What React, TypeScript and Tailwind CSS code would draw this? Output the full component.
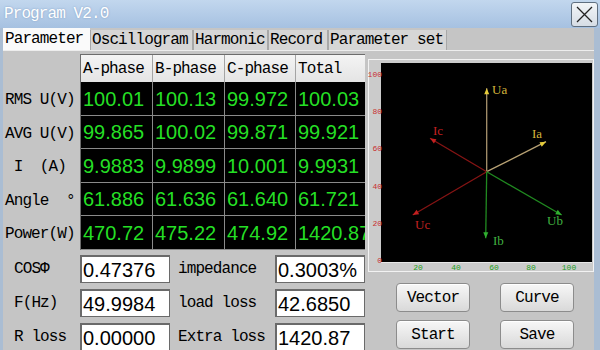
import React from "react";

const mono = "font-['Liberation_Mono',monospace] text-[16px] tracking-[-0.9px]";
const sans = "font-['Liberation_Sans',Arial,sans-serif]";

const tabs = [
  ["Parameter", "w-[87px]"],
  ["Oscillogram", "w-[103px]"],
  ["Harmonic", "w-[75px]"],
  ["Record", "w-[60px]"],
  ["Parameter set", "w-[119px]"],
];
const header = ["A-phase", "B-phase", "C-phase", "Total"];
const colW = ["w-[72px]", "w-[72px]", "w-[71px]", "w-[72px]"];
const rowH = ["h-[34px]", "h-[33px]", "h-[34px]", "h-[33px]", "h-[34px]"];

const rows = [
  { label: "RMS U(V)", values: ["100.01", "100.13", "99.972", "100.03"] },
  { label: "AVG U(V)", values: ["99.865", "100.02", "99.871", "99.921"] },
  { label: " I  (A)", values: ["9.9883", "9.9899", "10.001", "9.9931"] },
  { label: "Angle  °", values: ["61.886", "61.636", "61.640", "61.721"] },
  { label: "Power(W)", values: ["470.72", "475.22", "474.92", "1420.87"] },
];

const fields = [
  ["COSΦ", "0.47376", "impedance", "0.3003%"],
  ["F(Hz)", "49.9984", "load loss", "42.6850"],
  ["R loss", "0.00000", "Extra loss", "1420.87"],
];

// vector lines, relative to the chart panel
const cx = 118.7;
const cy = 112.7;
const vectors = [
  { name: "Ua", x: 118.7, y: 29.3, line: "#a8936e", head: "#e6cc3a", text: "#d4b43c", lx: 124, ly: 35 },
  { name: "Ia", x: 178, y: 82.7, line: "#b8a274", head: "#e6cc3a", text: "#d4b43c", lx: 164, ly: 79 },
  { name: "Ic", x: 62, y: 79.3, line: "#861414", head: "#c42020", text: "#c42020", lx: 65, ly: 76 },
  { name: "Uc", x: 44.7, y: 156, line: "#861414", head: "#c42020", text: "#c42020", lx: 47, ly: 170 },
  { name: "Ub", x: 193.7, y: 156, line: "#208a20", head: "#30b030", text: "#40b040", lx: 179, ly: 166 },
  { name: "Ib", x: 117.7, y: 179.3, line: "#208a20", head: "#30b030", text: "#40b040", lx: 125, ly: 186 },
];

function arrowHead(x: number, y: number) {
  const a = Math.atan2(y - cy, x - cx);
  const len = 6;
  const w = 2.5;
  const bx = x - Math.cos(a) * len;
  const by = y - Math.sin(a) * len;
  const px = -Math.sin(a) * w;
  const py = Math.cos(a) * w;
  return `${x},${y} ${bx + px},${by + py} ${bx - px},${by - py}`;
}

function VectorChart() {
  const yTicks = [
    ["100", 18],
    ["80", 55],
    ["60", 92],
    ["40", 130],
    ["20", 167],
    ["0", 204],
  ];
  const xTicks = [
    ["20", 50],
    ["40", 88],
    ["60", 126],
    ["80", 163],
    ["100", 201],
  ];
  return (
    <svg width="226" height="213" viewBox="0 0 226 213" className="block">
      <rect x="0" y="0" width="226" height="213" fill="#cbcbcb" />
      <rect x="0.5" y="0.5" width="225" height="212" fill="none" stroke="#f2f2f2" />
      <rect x="13" y="4" width="211" height="199" fill="#000" />
      <line x1="13" y1="203.5" x2="224" y2="203.5" stroke="#e8e8e8" />
      {yTicks.map(([t, y]) => (
        <text
          key={t}
          x="14"
          y={y}
          fill="#c83030"
          fontSize="8"
          textAnchor="end"
          fontFamily="Liberation Mono, monospace"
        >
          {t}
        </text>
      ))}
      {xTicks.map(([t, x]) => (
        <text
          key={t}
          x={x}
          y="211"
          fill="#22a022"
          fontSize="8"
          textAnchor="middle"
          fontFamily="Liberation Mono, monospace"
        >
          {t}
        </text>
      ))}
      {vectors.map((v) => (
        <g key={v.name}>
          <line x1={cx} y1={cy} x2={v.x} y2={v.y} stroke={v.line} strokeWidth="1.3" />
          <polygon points={arrowHead(v.x, v.y)} fill={v.head} />
          <text
            x={v.lx}
            y={v.ly}
            fill={v.text}
            fontSize="13"
            fontFamily="Liberation Serif, serif"
          >
            {v.name}
          </text>
        </g>
      ))}
    </svg>
  );
}

function Btn({ label }: { label: string }) {
  return (
    <button
      className={`${mono} w-[74px] h-[29px] rounded-[4px] border border-[#8c8c8c] bg-gradient-to-b from-[#f7f7f7] to-[#d9d9d9] text-black shadow-[inset_0_1px_0_#fff]`}
    >
      {label}
    </button>
  );
}

export default function App() {
  return (
    <div className="w-[600px] h-[350px] overflow-hidden flex flex-col bg-[#c5c5c5]">
      {/* Title bar */}
      <div className="h-[28px] shrink-0 flex items-center justify-between pl-[4px] pr-[2px] bg-gradient-to-b from-[#c2d7ee] to-[#a6c1e1]">
        <span className={`${mono} text-[16px] text-white [text-shadow:0_0_2px_#7f9cc0]`}>
          Program V2.0
        </span>
        <button className="w-[27px] h-[25px] rounded-[3px] border border-[#5f6f80] bg-gradient-to-b from-[#f2f5f8] to-[#d6dde5] flex items-center justify-center">
          <svg width="19" height="19" viewBox="0 0 19 19">
            <path d="M2 2 L17 17 M17 2 L2 17" stroke="#222" strokeWidth="1.3" />
          </svg>
        </button>
      </div>

      <div className="flex-1 flex flex-col border-l-[3px] border-r-[6px] border-[#aabdd3]">
        {/* Tabs */}
        <div className="h-[22px] shrink-0 flex items-end">
          {tabs.map(([t, w], i) => (
            <div
              key={t}
              className={
                i === 0
                  ? `${mono} ${w} h-[22px] pl-[2px] bg-[#fafafa] text-black flex items-center whitespace-nowrap`
                  : `${mono} ${w} h-[20px] pl-[1px] bg-[#d6d6d6] border-l border-r border-[#a8a8a8] text-black flex items-center whitespace-nowrap`
              }
            >
              {t}
            </div>
          ))}
        </div>

        {/* Pane */}
        <div className="flex-1 flex border-t border-[#ededed]">
          {/* Left column */}
          <div className="w-[362px] shrink-0 flex flex-col pt-[3px]">
            <div className="flex">
              <div className="w-[77px] shrink-0 flex flex-col">
                <div className="h-[28px]" />
                {rows.map((r, i) => (
                  <div
                    key={r.label}
                    className={`${mono} ${rowH[i]} flex items-center pl-[2px] pt-[2px] whitespace-pre text-black`}
                  >
                    {r.label}
                  </div>
                ))}
              </div>
              <div className="flex-1 overflow-hidden border-l border-t border-[#6c6c6c]">
                <div className="flex w-max">
                  {header.map((h, j) => (
                    <div
                      key={h}
                      className={`${mono} ${colW[j]} h-[27px] shrink-0 flex items-center pl-[2px] bg-gradient-to-b from-[#f4f4f4] to-[#e4e4e4] border-r border-[#a4a4a4] text-black`}
                    >
                      {h}
                    </div>
                  ))}
                </div>
                {rows.map((r, i) => (
                  <div key={r.label} className="flex w-max">
                    {r.values.map((v, j) => (
                      <div
                        key={j}
                        className={`${sans} ${colW[j]} ${rowH[i]} shrink-0 flex items-center pl-[2px] bg-black border-r border-b border-[#8a8a8a] text-[20px] text-[#25df25] overflow-hidden whitespace-nowrap`}
                      >
                        {v}
                      </div>
                    ))}
                  </div>
                ))}
              </div>
            </div>

            <div className="flex flex-col gap-[6px] mt-[5px]">
              {fields.map((f) => (
                <div key={f[0]} className="flex items-center h-[28px]">
                  <div className={`${mono} w-[77px] shrink-0 pl-[11px] text-black`}>{f[0]}</div>
                  <div
                    className={`${sans} w-[90px] h-[28px] shrink-0 flex items-center pl-[1px] bg-white border border-t-2 border-l-2 border-[#6a6a6a] text-[20px] text-black`}
                  >
                    {f[1]}
                  </div>
                  <div className={`${mono} w-[105px] shrink-0 pl-[8px] text-black`}>{f[2]}</div>
                  <div
                    className={`${sans} w-[90px] h-[28px] shrink-0 flex items-center pl-[1px] bg-white border border-t-2 border-l-2 border-[#6a6a6a] text-[20px] text-black`}
                  >
                    {f[3]}
                  </div>
                </div>
              ))}
            </div>
          </div>

          {/* Right column */}
          <div className="w-[226px] shrink-0 ml-[3px] pt-[8px] flex flex-col">
            <VectorChart />
            <div className="flex flex-col gap-[8px] mt-[11px] pl-[28px]">
              <div className="flex gap-[30px]">
                <Btn label="Vector" />
                <Btn label="Curve" />
              </div>
              <div className="flex gap-[30px]">
                <Btn label="Start" />
                <Btn label="Save" />
              </div>
            </div>
          </div>
        </div>
      </div>
    </div>
  );
}
